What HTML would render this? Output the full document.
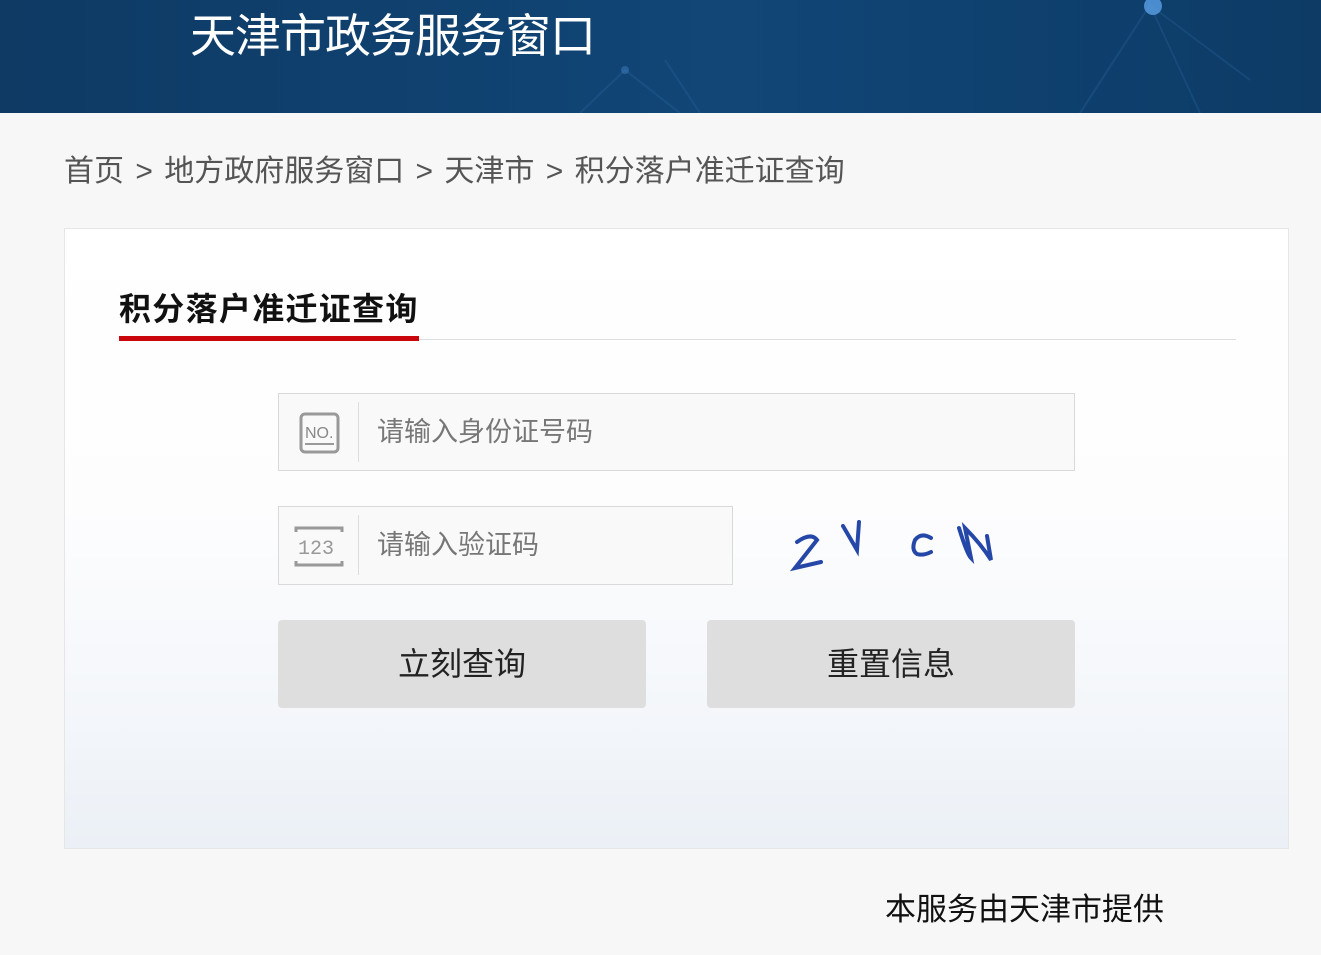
<!DOCTYPE html>
<html><head><meta charset="utf-8"><style>
*{margin:0;padding:0;box-sizing:border-box}
body{width:1321px;height:955px;background:#f7f7f7;font-family:"Liberation Sans","Noto Sans CJK SC",sans-serif;position:relative;overflow:hidden}
.hd{position:absolute;left:0;top:0;width:1321px;height:113px;background:linear-gradient(90deg,#0e3a64 0%,#114677 55%,#0f416f 75%,#0d3b66 100%)}
.hd h1{position:absolute;left:190px;top:8px;color:#fff;font-size:46px;font-weight:normal;letter-spacing:-1px;line-height:56px}
.bc{position:absolute;left:64px;top:152px;font-size:30px;color:#555;line-height:40px;white-space:nowrap}
.bc i{font-style:normal;margin:0 3px}
.card{position:absolute;left:64px;top:228px;width:1225px;height:621px;background:linear-gradient(180deg,#fff 0%,#fdfdfe 45%,#f3f6fa 80%,#ebf0f6 100%);border:1px solid #e6e6e6}
.tt{position:absolute;left:54px;top:58px;font-size:32px;font-weight:bold;color:#111;line-height:44px;letter-spacing:1.3px}
.ln{position:absolute;left:54px;top:110px;width:1117px;height:1px;background:#ddd}
.rd{position:absolute;left:54px;top:107px;width:300px;height:5px;background:#c8060c}
.inp{position:absolute;border:1px solid #d9d9d9;background:#f9f9f9}
.inp .ic{position:absolute;left:0;top:8px;width:80px;height:60px;border-right:1px solid #ddd}
.inp span{position:absolute;left:98px;font-size:27px;color:#777;line-height:76px;top:0}
.btn{position:absolute;top:391px;width:368px;height:88px;background:#dedede;border-radius:4px;font-size:32px;color:#222;text-align:center;line-height:88px}
.ft{position:absolute;left:885px;top:890px;font-size:31px;color:#111;line-height:40px}
</style></head><body>
<div class="hd">
<svg width="1321" height="113" style="position:absolute;left:0;top:0">
<g stroke="#3a7bc0" stroke-opacity=".2" stroke-width="2" fill="none">
<path d="M1150 5 L1080 113 M1150 5 L1200 113 M1150 5 L1250 80 M625 70 L680 113 M625 70 L580 113 M665 60 L700 113"/></g>
<circle cx="1153" cy="6" r="9" fill="#5aa0e6" opacity=".8"/>
<circle cx="625" cy="70" r="4" fill="#4a8ad0" opacity=".4"/>
</svg>
<h1>天津市政务服务窗口</h1></div>
<div class="bc">首页 <i>&gt;</i> 地方政府服务窗口 <i>&gt;</i> 天津市 <i>&gt;</i> 积分落户准迁证查询</div>
<div class="card">
<div class="tt">积分落户准迁证查询</div>
<div class="ln"></div><div class="rd"></div>
<div class="inp" style="left:213px;top:164px;width:797px;height:78px">
<div class="ic"><svg width="80" height="60"><rect x="22" y="12" width="37" height="38" rx="4" fill="none" stroke="#999" stroke-width="3"/><text x="26" y="36" font-size="16" fill="#888" font-family="Liberation Sans">NO.</text><line x1="26" y1="42" x2="55" y2="42" stroke="#999" stroke-width="2"/></svg></div>
<span>请输入身份证号码</span></div>
<div class="inp" style="left:213px;top:277px;width:455px;height:79px">
<div class="ic"><svg width="80" height="60"><path d="M17 17 V13 H63 V17 M17 46 V50 H63 V46" fill="none" stroke="#999" stroke-width="3"/><text x="19" y="39" font-size="20" fill="#999" font-family="Liberation Mono">123</text></svg></div>
<span>请输入验证码</span></div>
<svg style="position:absolute;left:720px;top:285px" width="220" height="60">
<g stroke="#2547a8" stroke-width="4" fill="none" stroke-linecap="round">
<path d="M12 28 Q26 18 32 26 L10 54 L36 48"/>
<path d="M58 12 L72 36 L74 8"/>
<path d="M146 24 Q136 18 130 26 Q126 36 132 40 Q138 42 146 38"/>
<path d="M174 14 Q182 40 186 44 L180 14 Q196 30 206 46 L202 22"/>
</g></svg>
<div class="btn" style="left:213px">立刻查询</div>
<div class="btn" style="left:642px">重置信息</div>
</div>
<div class="ft">本服务由天津市提供</div>
</body></html>
